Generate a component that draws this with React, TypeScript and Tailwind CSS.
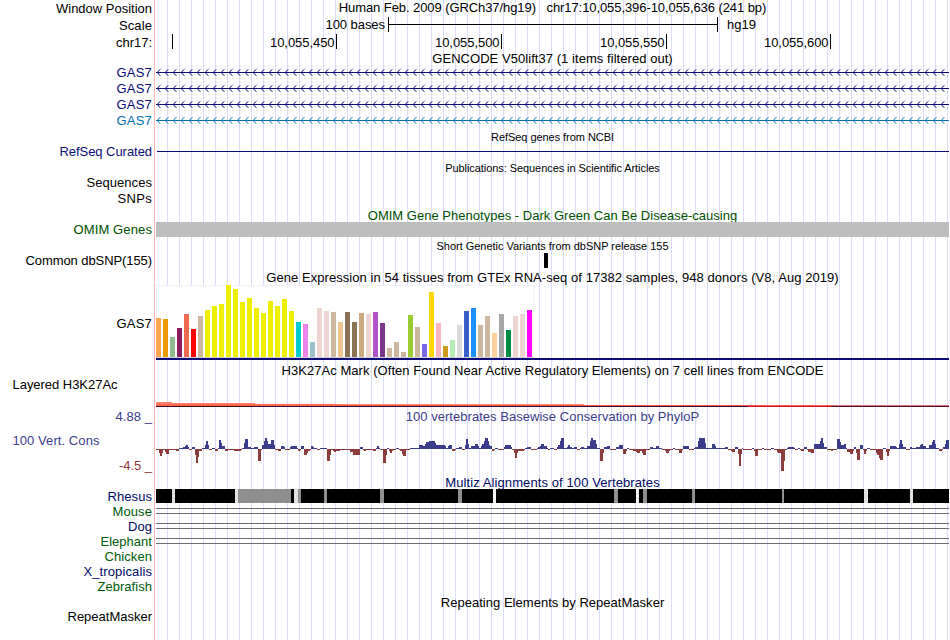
import { useLayoutEffect, useRef } from "react";

/** Text stretched or tightened through letter spacing so that it takes `w` pixels. */
function Fit({ w, className = "", children }: { w: number; className?: string; children: string }) {
  const ref = useRef<HTMLSpanElement>(null);
  useLayoutEffect(() => {
    const el = ref.current;
    if (!el) return;
    el.style.letterSpacing = "0px";
    const natural = el.getBoundingClientRect().width;
    el.style.letterSpacing = `${(w - natural) / children.length}px`;
  }, [w, children]);
  return (
    <span ref={ref} className={`inline-block whitespace-pre ${className}`}>
      {children}
    </span>
  );
}

function Label({ w, className = "", children }: { w: number; className?: string; children: string }) {
  return (
    <div className={`h-4 shrink-0 text-right ${className}`}>
      <Fit w={w}>{children}</Fit>
    </div>
  );
}

function Title({ w, className = "", children }: { w: number; className?: string; children: string }) {
  return (
    <div className={`flex shrink-0 justify-center ${className}`}>
      <Fit w={w}>{children}</Fit>
    </div>
  );
}

const WIDTH = 793;

function GeneLine({ color }: { color: string }) {
  const barbs = Array.from({ length: 99 }, (_, i) => {
    const x = 1.3 + i * 8;
    return `M${x + 3} 0.2L${x} 3.5L${x + 3} 6.8`;
  }).join("");
  return (
    <svg width={WIDTH} height="7" className="block shrink-0">
      <rect x="0" y="3" width={WIDTH} height="1" fill={color} />
      <path d={barbs} fill="none" stroke={color} strokeWidth="1" />
    </svg>
  );
}

const tissues: [number, string][] = [
  [39, "#ffa54f"], [38, "#ee9a00"], [20, "#8fbc8f"], [29, "#8b1c62"], [43, "#ee6a50"], [28, "#ff0000"],
  [41, "#cdb79e"], [47, "#eeee00"], [51, "#eeee00"], [53, "#eeee00"], [72, "#eeee00"], [68, "#eeee00"],
  [55, "#eeee00"], [59, "#eeee00"], [49, "#eeee00"], [44, "#eeee00"], [56, "#eeee00"], [51, "#eeee00"],
  [58, "#eeee00"], [46, "#eeee00"], [35, "#00cdcd"], [33, "#ee82ee"], [15, "#9ac0cd"], [49, "#eed5d2"],
  [46, "#eed5d2"], [45, "#cdb79e"], [35, "#eec591"], [45, "#8b7355"], [35, "#8b7355"], [44, "#cdaa7d"],
  [43, "#eed5d2"], [45, "#b452cd"], [34, "#7a378b"], [9, "#cdb79e"], [15, "#cdb79e"], [5, "#cdb79e"],
  [42, "#9acd32"], [30, "#cdb79e"], [13, "#7a67ee"], [65, "#ffd700"], [34, "#ffb6c1"], [11, "#cd9b1d"],
  [17, "#b4eeb4"], [32, "#d9d9d9"], [46, "#3a5fcd"], [49, "#1e90ff"], [32, "#cdb79e"], [41, "#cdb79e"],
  [24, "#ffd39b"], [43, "#a6a6a6"], [27, "#008b45"], [41, "#eed5d2"], [43, "#eed5d2"], [47, "#ff00ff"],
];

/** Conservation score runs: start of the block, then [end, score] pairs in thirds of a pixel. */
const scoreBlocks: { start: number; from: number; runs: number[] }[] = [
  {
    start: 150,
    from: 18,
    runs: [
      27, -1, 30, -4, 36, -7, 39, -4, 45, -1, 48, -3, 57, -5, 78, -1, 87, -2, 99, 1, 105, 2, 108, 3, 114, 4, 117, 2,
      126, -1, 135, 2, 138, -6, 144, -14, 147, -8, 156, -2, 165, 1, 168, 4, 174, 8, 177, 4, 186, -1, 195, 1, 204, -2,
      207, 1, 213, 9, 216, 6, 225, 3, 234, -2, 252, -1, 273, -2, 276, -1, 282, 1, 285, 6, 294, 10, 303, 2, 312, 1,
      324, 2, 333, -12, 336, -1, 342, 4, 345, 8, 351, 11, 354, 8, 363, 5, 372, 9, 375, 4, 384, -1, 393, -2, 402, 3,
      405, 2, 411, -1, 420, -1, 423, 2, 441, 3, 444, 1, 450, -2, 453, -1, 462, 3, 471, -6, 474, -4, 480, -2, 483, -1,
      489, 3, 492, 2, 501, 1, 510, -1, 531, 1, 540, -12, 543, -6, 549, -1, 552, -2, 558, -3, 570, -2, 600, -1,
    ],
  },
  {
    start: 350,
    from: 0,
    runs: [
      9, -3, 30, -6, 39, 2, 42, -1, 48, -2, 69, -1, 78, -2, 81, 1, 87, 3, 90, 1, 99, -1, 108, -14, 111, -6, 117, 1,
      120, -2, 126, -4, 129, -2, 138, -1, 147, 1, 150, -1, 156, -2, 159, -5, 168, -7, 180, -1, 207, 1, 219, 4, 225, 3,
      228, 5, 237, 7, 255, 8, 258, 6, 285, 4, 288, 3, 294, 1, 297, 3, 306, 4, 315, -2, 318, -1, 327, 1, 336, 2,
      345, -1, 348, 4, 354, 10, 357, 5, 363, 1, 375, 3, 384, 5, 387, 3, 393, 1, 396, 3, 402, 5, 405, 8, 414, 11,
      417, 8, 420, 4, 426, 3, 432, -2, 435, -1, 444, 1, 462, -1, 465, 2, 483, 4, 486, 2, 492, -1, 495, -4, 501, -9,
      504, -4, 522, -2, 525, -1, 531, 1, 543, 2, 561, -1, 564, 1, 570, 2, 573, 3, 582, 5, 591, 3, 594, 1, 600, -1,
    ],
  },
  {
    start: 550,
    from: 0,
    runs: [
      12, 1, 21, -1, 24, 2, 30, 4, 33, 8, 42, 11, 51, 1, 54, 2, 60, 4, 66, 2, 72, 1, 81, 2, 90, -1, 93, 1, 102, 2,
      111, 1, 120, 3, 123, 8, 129, 11, 138, 9, 141, 5, 150, 1, 159, -12, 162, -4, 171, 2, 180, 3, 198, -1, 207, 2,
      219, 4, 228, -5, 231, -2, 237, 1, 249, -1, 258, -2, 261, -3, 270, -4, 276, -2, 279, -4, 288, -6, 300, -1,
      309, 2, 318, 1, 327, 3, 336, 1, 345, -1, 348, -2, 357, -4, 360, -2, 369, -1, 375, 1, 387, -1, 396, -4, 399, -1,
      417, 3, 432, -1, 435, 1, 444, 2, 447, 8, 465, 11, 468, 6, 486, 1, 495, 5, 498, 3, 525, 1, 534, 2, 543, -1,
      546, -2, 555, -3, 564, 2, 567, -5, 573, -17, 576, -5, 579, 1, 600, -1,
    ],
  },
  {
    start: 750,
    from: 0,
    runs: [
      6, -1, 12, 1, 15, -2, 24, -7, 36, -1, 42, 1, 63, -1, 72, 1, 81, -1, 84, -3, 93, -4, 102, -22, 105, -12, 111, -1,
      114, 1, 132, 2, 135, 1, 144, -1, 150, 1, 153, -1, 162, -2, 171, 2, 174, -1, 183, -3, 192, -4, 210, 5, 213, 8,
      219, 11, 222, 6, 231, 2, 243, -1, 249, -2, 261, -1, 270, 10, 273, 7, 282, 4, 288, 5, 291, 1, 300, -3, 309, -5,
      312, -2, 318, 2, 321, -4, 330, -11, 339, 4, 342, -1, 348, -5, 351, -2, 360, 1, 378, -1, 381, -4, 387, -6,
      390, -9, 399, -11, 408, 1, 411, -3, 417, -7, 420, -2, 438, 3, 441, 2, 447, 1, 450, 5, 456, 9, 459, 5, 468, 2,
      480, -1, 486, 2, 498, 1, 510, 2, 513, 4, 519, 5, 528, 3, 537, 1, 546, 4, 549, 7, 555, 9, 558, 5, 567, 1,
      576, -2, 579, -1, 585, 2, 588, 5, 597, 9,
    ],
  },
];

function Conservation() {
  const bars: { x: number; w: number; v: number }[] = [];
  for (const b of scoreBlocks) {
    let prev = b.from;
    for (let i = 0; i < b.runs.length; i += 2) {
      bars.push({ x: b.start - 156 + prev / 3, w: (b.runs[i] - prev) / 3, v: b.runs[i + 1] });
      prev = b.runs[i];
    }
  }
  return (
    <svg width={WIDTH} height="34" shapeRendering="crispEdges" className="mt-[14px] block shrink-0">
      {bars.map((b, i) => (
        <rect
          key={i}
          x={b.x}
          y={b.v > 0 ? 11 - b.v : 11}
          width={b.w}
          height={Math.abs(b.v)}
          fill={b.v > 0 ? "#3c3c8c" : "#8c3c3c"}
        />
      ))}
    </svg>
  );
}

/** Acetylation signal: x, y, width, height, colour. */
const signal: [number, number, number, number, string][] = [
  [0, 0, 16, 2, "#ff8080"],
  [0, 1, 99, 1, "#ff8070"],
  [0, 2, 181, 2, "#ff6a48"],
  [181, 2, 247, 1, "#ff8080"],
  [181, 3, 494, 1, "#ff5a46"],
  [675, 3, 118, 1, "#e8707c"],
  [0, 4, 592, 1, "#3c0a32"],
  [592, 4, 83, 1, "#d2142d"],
  [675, 4, 118, 1, "#500a28"],
];

/** Rhesus alignment: right edge of each block and its shade. */
const alignment: [number, string][] = [
  [172, "#000"], [175, "#e1e1e1"], [235, "#000"], [238, "#e1e1e1"], [291, "#8f8f8f"], [294, "#000"],
  [298, "#e1e1e1"], [301, "#8f8f8f"], [324, "#000"], [327, "#8f8f8f"], [380, "#000"], [384, "#8f8f8f"],
  [458, "#000"], [462, "#8f8f8f"], [493, "#000"], [496, "#f0f0f0"], [614, "#000"], [618, "#8f8f8f"],
  [636, "#000"], [639, "#f0f0f0"], [643, "#000"], [647, "#8f8f8f"], [692, "#000"], [695, "#8f8f8f"],
  [782, "#000"], [784, "#8f8f8f"], [864, "#000"], [868, "#e1e1e1"], [910, "#000"], [913, "#e1e1e1"],
  [949, "#000"],
];

export default function App() {
  return (
    <div className="flex h-[640px] w-[950px] overflow-hidden bg-white font-['Liberation_Sans',Arial,sans-serif] text-[13px] leading-[18px] text-black">
      <div className="flex w-[154px] shrink-0 flex-col pr-[2px]">
        <Label w={96}>Window Position</Label>
        <Label w={33} className="mt-px">Scale</Label>
        <Label w={36} className="mt-px">chr17:</Label>
        <Label w={35.5} className="mt-[14px] text-[#0c0c78]">GAS7</Label>
        <Label w={35.5} className="text-[#0c0c78]">GAS7</Label>
        <Label w={35.5} className="text-[#0c0c78]">GAS7</Label>
        <Label w={35.5} className="text-[#0072b2]">GAS7</Label>
        <Label w={92.5} className="mt-[15px] text-[#0c0c78]">RefSeq Curated</Label>
        <Label w={65.5} className="mt-[15px]">Sequences</Label>
        <Label w={34.5}>SNPs</Label>
        <Label w={78.5} className="mt-[15px] text-[#005000]">OMIM Genes</Label>
        <Label w={126.5} className="mt-[15px]">Common dbSNP(155)</Label>
        <Label w={35.5} className="mt-[47px]">GAS7</Label>
        <div className="mt-[45px] h-4 shrink-0 pl-[12.5px]">
          <Fit w={105}>Layered H3K27Ac</Fit>
        </div>
        <Label w={36.5} className="mt-4 text-[#3c3c8c]">4.88 _</Label>
        <div className="mt-2 h-4 shrink-0 pl-[12.5px] text-[#3c3c8c]">
          <Fit w={87}>100 Vert. Cons</Fit>
        </div>
        <Label w={33} className="mt-[9px] text-[#8c3c3c]">-4.5 _</Label>
        <div className="mt-[15px] flex shrink-0 flex-col gap-0 [&>div]:h-[15px]">
          <Label w={44.5} className="text-[#000a64]">Rhesus</Label>
          <Label w={39.5} className="text-[#005a0a]">Mouse</Label>
          <Label w={24} className="text-[#000a64]">Dog</Label>
          <Label w={51.5} className="text-[#005a0a]">Elephant</Label>
          <Label w={47.5} className="text-[#005a0a]">Chicken</Label>
          <Label w={68.5} className="text-[#000a64]">X_tropicalis</Label>
          <Label w={54.5} className="text-[#005a0a]">Zebrafish</Label>
        </div>
        <Label w={84.5} className="mt-[15px]">RepeatMasker</Label>
      </div>

      <div className="mr-px w-px shrink-0 bg-[#ffb4b4]" />

      <div className="flex w-[793px] shrink-0 flex-col overflow-hidden bg-[repeating-linear-gradient(to_right,transparent_0px,transparent_11px,#dcdcfa_11px,#dcdcfa_12px)]">
        <Title w={427.5} className="-mt-px h-4">{"Human Feb. 2009 (GRCh37/hg19)   chr17:10,055,396-10,055,636 (241 bp)"}</Title>

        <div className="mt-px flex h-[18px] shrink-0">
          <div className="w-[232px] pr-[3px] text-right">
            <Fit w={59.5}>100 bases</Fit>
          </div>
          <div className="mt-px flex h-[15px] w-[330px] items-center border-x border-black">
            <div className="h-px w-full bg-black" />
          </div>
          <Fit w={29} className="ml-[9px]">hg19</Fit>
        </div>

        <div className="flex h-[15px] shrink-0 text-right [&>div]:border-r [&>div]:border-black [&>div]:pr-[1.5px]">
          <div className="w-[17px]" />
          <div className="w-[164px]"><Fit w={64.5}>10,055,450</Fit></div>
          <div className="w-[165px]"><Fit w={64.5}>10,055,500</Fit></div>
          <div className="w-[165px]"><Fit w={64.5}>10,055,550</Fit></div>
          <div className="w-[164px]"><Fit w={64.5}>10,055,600</Fit></div>
        </div>

        <Title w={240.5} className="mt-px h-4">GENCODE V50lift37 (1 items filtered out)</Title>
        <div className="mt-[3px] flex shrink-0 flex-col gap-[9px]">
          <GeneLine color="#0c0c78" />
          <GeneLine color="#0c0c78" />
          <GeneLine color="#0c0c78" />
          <GeneLine color="#0072b2" />
        </div>

        <Title w={123} className="mt-[5px] h-4 text-[11px] leading-4">RefSeq genes from NCBI</Title>
        <div className="mt-[6px] ml-px h-px shrink-0 bg-[#0c0c78]" />

        <Title w={214.5} className="mt-2 h-4 text-[11px] leading-4">Publications: Sequences in Scientific Articles</Title>

        <Title w={369.5} className="mt-[31px] h-[15px] overflow-hidden text-[#005000]">OMIM Gene Phenotypes - Dark Green Can Be Disease-causing</Title>
        <div className="h-[15px] shrink-0 bg-[#bebebe]" />

        <Title w={232} className="mt-px h-4 text-[11px] leading-4">Short Genetic Variants from dbSNP release 155</Title>
        <div className="-mt-px ml-[388px] h-[15px] w-1 shrink-0 bg-black" />

        <Title w={572.5} className="mt-px h-4">Gene Expression in 54 tissues from GTEx RNA-seq of 17382 samples, 948 donors (V8, Aug 2019)</Title>
        <svg width="378" height="73" shapeRendering="crispEdges" className="block shrink-0">
          <rect width="378" height="73" fill="#f0f0f0" />
          <rect x="1" y="1" width="376" height="71" fill="#fff" />
          <rect y="72" width="378" height="1" fill="#d2d2d2" />
          {tissues.map(([h, color], i) => (
            <rect key={i} x={i * 7} y={72 - h} width="5" height={h} fill={color} />
          ))}
        </svg>
        <div className="h-[2px] shrink-0 bg-[#0c0c78]" />

        <Title w={542} className="mt-[2px] h-4">H3K27Ac Mark (Often Found Near Active Regulatory Elements) on 7 cell lines from ENCODE</Title>
        <svg width={WIDTH} height="5" shapeRendering="crispEdges" className="mt-6 block shrink-0">
          {signal.map(([x, y, w, h, color], i) => (
            <rect key={i} x={x} y={y} width={w} height={h} fill={color} />
          ))}
        </svg>

        <Title w={293.5} className="mt-px h-4 text-[#3c3c8c]">100 vertebrates Basewise Conservation by PhyloP</Title>
        <Conservation />

        <Title w={214.5} className="mt-[2px] h-[15px] overflow-hidden text-[#000a64]">Multiz Alignments of 100 Vertebrates</Title>
        <svg width={WIDTH} height="14" shapeRendering="crispEdges" className="block shrink-0">
          {alignment.map(([end, color], i) => {
            const start = i === 0 ? 156 : alignment[i - 1][0];
            return <rect key={i} x={start - 156} width={end - start} height="14" fill={color} />;
          })}
        </svg>
        <div className="mt-[5px] flex shrink-0 flex-col gap-[9px]">
          <div className="h-[6px] border-y border-[#6e6e6e]" />
          <div className="h-[6px] border-y border-[#6e6e6e]" />
          <div className="h-[6px] border-y border-[#6e6e6e]" />
        </div>

        <Title w={223.5} className="mt-[50px] h-4">Repeating Elements by RepeatMasker</Title>
      </div>
    </div>
  );
}
